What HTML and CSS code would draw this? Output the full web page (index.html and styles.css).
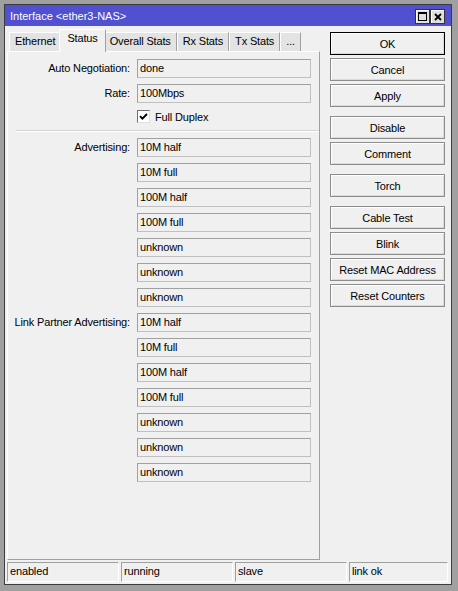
FILE: index.html
```html
<!DOCTYPE html>
<html>
<head>
<meta charset="utf-8">
<link rel="stylesheet" href="styles.css">
</head>
<body>
<div class="window">
  <div class="titlebar">
    <span class="title">Interface &lt;ether3-NAS&gt;</span>
    <div class="tbtns">
      <span class="tbtn"><svg width="9" height="9" viewBox="0 0 9 9"><rect x="0.5" y="0.5" width="8" height="8" fill="none" stroke="#000"/><rect x="0" y="0" width="9" height="2" fill="#000"/></svg></span>
      <span class="tbtn"><svg width="8" height="8" viewBox="0 0 8 8"><path d="M1 1L7 7M7 1L1 7" stroke="#000" stroke-width="1.8"/></svg></span>
    </div>
  </div>
  <div class="client">
    <div class="main">
      <div class="left">
        <div class="tabs">
          <div class="tab">Ethernet</div>
          <div class="tab active">Status</div>
          <div class="tab">Overall Stats</div>
          <div class="tab">Rx Stats</div>
          <div class="tab">Tx Stats</div>
          <div class="tab">...</div>
        </div>
        <div class="panel">
          <div class="form">
            <div class="lbl">Auto Negotiation:</div><div class="field">done</div>
            <div class="lbl">Rate:</div><div class="field">100Mbps</div>
          </div>
          <div class="checkrow">
            <span class="box"><svg width="9" height="9" viewBox="0 0 9 9"><path d="M1 4.2L3.4 6.6L8 2" fill="none" stroke="#000" stroke-width="1.9"/></svg></span>
            <span>Full Duplex</span>
          </div>
          <div class="divider"></div>
          <div class="form">
            <div class="lbl">Advertising:</div><div class="field">10M half</div>
            <div class="lbl"></div><div class="field">10M full</div>
            <div class="lbl"></div><div class="field">100M half</div>
            <div class="lbl"></div><div class="field">100M full</div>
            <div class="lbl"></div><div class="field">unknown</div>
            <div class="lbl"></div><div class="field">unknown</div>
            <div class="lbl"></div><div class="field">unknown</div>
            <div class="lbl">Link Partner Advertising:</div><div class="field">10M half</div>
            <div class="lbl"></div><div class="field">10M full</div>
            <div class="lbl"></div><div class="field">100M half</div>
            <div class="lbl"></div><div class="field">100M full</div>
            <div class="lbl"></div><div class="field">unknown</div>
            <div class="lbl"></div><div class="field">unknown</div>
            <div class="lbl"></div><div class="field">unknown</div>
          </div>
        </div>
      </div>
      <div class="buttons">
        <div class="btn default">OK</div>
        <div class="btn">Cancel</div>
        <div class="btn">Apply</div>
        <div class="btn sep">Disable</div>
        <div class="btn">Comment</div>
        <div class="btn sep">Torch</div>
        <div class="btn sep">Cable Test</div>
        <div class="btn">Blink</div>
        <div class="btn">Reset MAC Address</div>
        <div class="btn">Reset Counters</div>
      </div>
    </div>
    <div class="status">
      <div class="cell">enabled</div>
      <div class="cell">running</div>
      <div class="cell">slave</div>
      <div class="cell">link ok</div>
    </div>
  </div>
</div>
</body>
</html>
```

FILE: styles.css
```css
body {
  margin: 0;
  background: #a0a0a0;
  font-family: "Liberation Sans", Arial, sans-serif;
  font-size: 11px;
  letter-spacing: -0.15px;
  color: #000;
}

.window {
  margin: 4px 0 0 4px;
  width: 448px;
  height: 581px;
  box-sizing: border-box;
  border: 1px solid #3c3c3c;
  background: #f0f0f0;
  display: flex;
  flex-direction: column;
}

.titlebar {
  height: 21px;
  flex: none;
  background: #5050d0;
  color: #fff;
  display: flex;
  align-items: flex-start;
  padding: 0 6px 0 5px;
}

.title {
  flex: 1;
  padding-top: 2px;
  line-height: 19px;
  white-space: nowrap;
  letter-spacing: 0;
}

.tbtns {
  display: flex;
  margin-top: 4px;
}

.tbtn {
  width: 15px;
  height: 15px;
  box-sizing: border-box;
  border: 1px solid #333;
  background: #e0e0e0;
  box-shadow: inset 1px 1px #fff;
  display: flex;
  align-items: center;
  justify-content: center;
}

.tbtn svg {
  display: block;
}

.client {
  flex: 1;
  display: flex;
  flex-direction: column;
  padding: 3px 3px 0 2px;
}

.main {
  display: flex;
  gap: 10px;
}

.left {
  width: 313px;
  flex: none;
}

.tabs {
  display: flex;
  align-items: flex-end;
  height: 22px;
  padding-left: 2px;
}

.tab {
  height: 19px;
  box-sizing: border-box;
  padding: 0 5px;
  line-height: 17px;
  border-top: 1px solid #fff;
  border-left: 1px solid #fff;
  border-right: 1px solid #a0a0a0;
  background: #e3e3e3;
  white-space: nowrap;
}

.tab.active {
  height: 23px;
  margin: 0 -2px -1px;
  padding: 0 7px;
  background: #f0f0f0;
  position: relative;
  z-index: 1;
}

.panel {
  height: 509px;
  box-sizing: border-box;
  border: 1px solid;
  border-color: #fff #a0a0a0 #a0a0a0 #fff;
  padding-top: 7px;
}

.form {
  display: grid;
  grid-template-columns: 122px 174px;
  column-gap: 7px;
  row-gap: 6px;
  grid-auto-rows: 19px;
}

.lbl {
  text-align: right;
  line-height: 19px;
  white-space: nowrap;
}

.field {
  box-sizing: border-box;
  border: 1px solid;
  border-color: #a0a0a0 #c0c0c0 #c0c0c0 #a0a0a0;
  padding-left: 2px;
  line-height: 17px;
  white-space: nowrap;
}

.checkrow {
  margin: 6px 0 0 129px;
  height: 15px;
  display: flex;
  align-items: center;
  gap: 5px;
}

.box {
  width: 13px;
  height: 13px;
  box-sizing: border-box;
  border: 1px solid;
  border-color: #707070 #e0e0e0 #e0e0e0 #707070;
  background: #fff;
  display: flex;
  align-items: center;
  justify-content: center;
}

.box svg {
  display: block;
}

.divider {
  margin: 6px 0 6px 8px;
  height: 1px;
  background: #d4d4d4;
  border-bottom: 1px solid #fff;
}

.buttons {
  width: 115px;
  flex: none;
  margin-top: 3px;
  margin-right: 3px;
  display: flex;
  flex-direction: column;
  gap: 3px;
}

.btn {
  height: 23px;
  box-sizing: border-box;
  border: 1px solid #8c8c8c;
  background: #f0f0f0;
  box-shadow: inset 1px 1px #fff, inset -1px -1px #dadada;
  display: flex;
  align-items: center;
  justify-content: center;
  white-space: nowrap;
}

.btn.default {
  border-color: #000;
}

.btn.sep {
  margin-top: 6px;
}

.status {
  margin-top: 2px;
  display: grid;
  grid-template-columns: 112px 112px 112px 99px;
  column-gap: 2px;
}

.cell {
  height: 20px;
  box-sizing: border-box;
  border: 1px solid;
  border-color: #a0a0a0 #fff #fff #a0a0a0;
  padding-left: 2px;
  line-height: 17px;
  white-space: nowrap;
}
```
